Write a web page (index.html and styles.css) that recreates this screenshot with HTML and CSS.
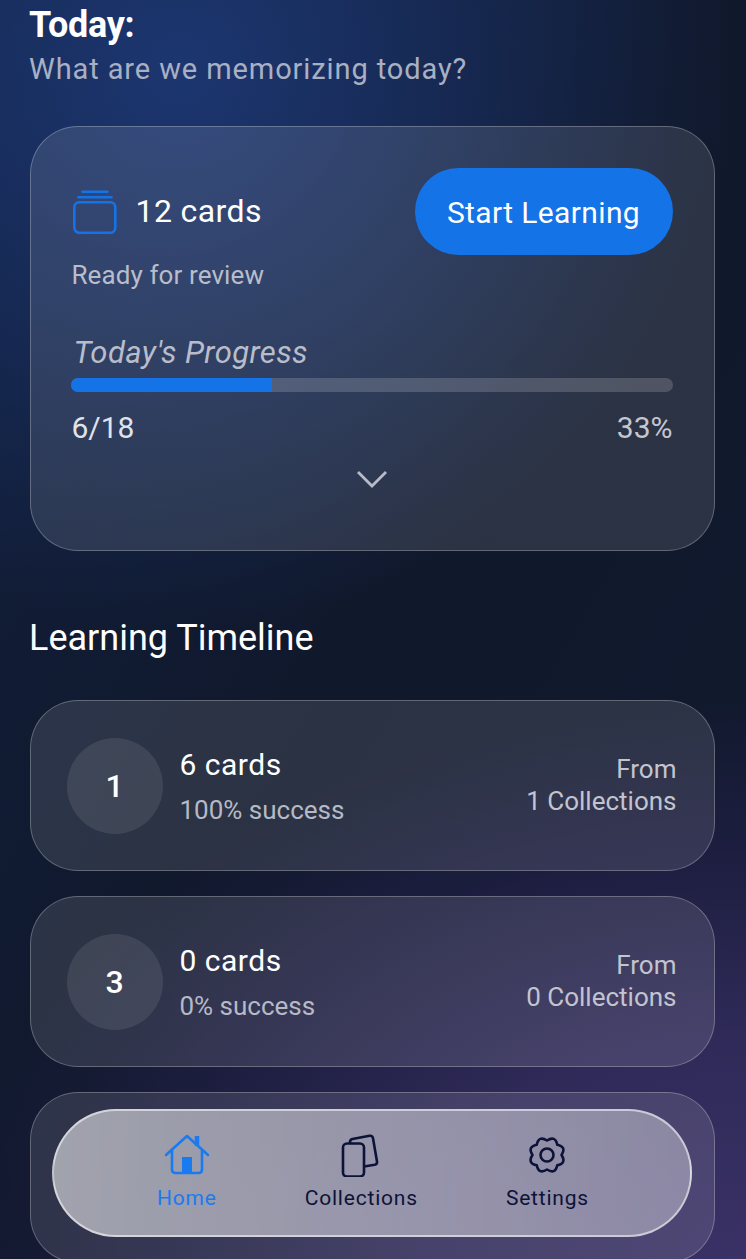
FILE: index.html
```html
<!DOCTYPE html>
<html lang="en">

<head>
  <meta charset="UTF-8">
  <meta name="viewport" content="width=device-width, initial-scale=1.0">
  <title>Today</title>
  <link rel="stylesheet" href="styles.css">
</head>

<body>
  <main class="page">
    <header class="page-head">
      <h1 class="page-title">Today:</h1>
      <p class="page-sub">What are we memorizing today?</p>
    </header>

    <section class="glass today-card">
      <div class="today-top">
        <div class="today-count">
          <svg class="stack-icon" width="46" height="46" viewBox="0 0 46 46" fill="none" stroke="#1473e6" stroke-width="2.6" stroke-linecap="round">
            <rect x="2.3" y="14.3" width="41" height="30.4" rx="5" />
            <path d="M6.5 9.2H39.5" />
            <path d="M10.5 3.8H35.5" />
          </svg>
          <span>12 cards</span>
        </div>
        <button class="start-btn">Start Learning</button>
      </div>
      <p class="today-ready">Ready for review</p>

      <p class="progress-label">Today's Progress</p>
      <div class="progress-track">
        <div class="progress-fill" style="width: 33.4%"></div>
      </div>
      <div class="progress-stats">
        <span>6/18</span>
        <span class="progress-pct">33%</span>
      </div>
      <svg class="chevron" width="32" height="20" viewBox="0 0 32 20" fill="none" stroke="#b8bcc8" stroke-width="2.8">
        <path d="M2 3L16 17L30 3" />
      </svg>
    </section>

    <h2 class="section-title">Learning Timeline</h2>

    <div class="timeline">
      <article class="glass day-card">
        <div class="day-badge">1</div>
        <div class="day-info">
          <div class="day-cards">6 cards</div>
          <div class="day-rate">100% success</div>
        </div>
        <div class="day-from">From<br>1 Collections</div>
      </article>
      <article class="glass day-card">
        <div class="day-badge">3</div>
        <div class="day-info">
          <div class="day-cards">0 cards</div>
          <div class="day-rate">0% success</div>
        </div>
        <div class="day-from">From<br>0 Collections</div>
      </article>
      <article class="glass day-card"></article>
    </div>
  </main>

  <nav class="bottom-nav">
    <a class="nav-item active" href="#">
      <svg width="46" height="44" viewBox="0 0 46 44" fill="none" stroke="#1a7bf0" stroke-width="2.6" stroke-linecap="round" stroke-linejoin="round">
        <path d="M2 22L23 3L44 22" />
        <path d="M8 18V36.5Q8 40 11.5 40H34.500Q38 40 38 36.500V18" />
        <path d="M33 3V13" stroke-width="4.5" stroke-linecap="butt" />
        <rect x="18" y="24" width="10" height="16" fill="#1a7bf0" stroke="none" />
      </svg>
      <span>Home</span>
    </a>
    <a class="nav-item" href="#">
      <svg width="44" height="44" viewBox="0 0 44 44" fill="none" stroke="#0d1338" stroke-width="2.6" stroke-linejoin="round">
        <rect x="4" y="10.500" width="21" height="33" rx="4" />
        <path d="M11 10.500V9Q11 6.500 13.500 6L30.500 2.800Q33.500 2.400 34 5.200L38 28.500Q38.400 31.200 35.700 31.800L25 33.500" />
      </svg>
      <span>Collections</span>
    </a>
    <a class="nav-item" href="#">
      <svg width="44" height="44" viewBox="-22 -22 44 44" fill="none" stroke="#0d1338" stroke-width="2.6" stroke-linejoin="round">
        <path d="M0 -14.500Q8.230 -19.860 10.250 -10.250Q19.860 -8.230 14.500 0Q19.860 8.230 10.250 10.250Q8.230 19.860 0 14.500Q-8.230 19.860 -10.250 10.250Q-19.860 8.230 -14.500 0Q-19.860 -8.230 -10.250 -10.250Q-8.230 -19.860 0 -14.500Z" />
        <circle cx="0" cy="0" r="6.500" />
      </svg>
      <span>Settings</span>
    </a>
  </nav>
</body>

</html>
```

FILE: styles.css
```css
* {
  box-sizing: border-box;
}

html,
body {
  margin: 0;
  height: 100%;
  overflow: hidden;
}

body {
  position: relative;
  font-family: Roboto, "Liberation Sans", sans-serif;
  color: #fff;
  background:
    radial-gradient(circle 560px at 180px 70px, rgba(28, 54, 112, 1), rgba(28, 54, 112, 0)),
    radial-gradient(ellipse 800px 560px at 746px 1259px, #3a3166 0%, #2f2a58 40%, #1d1e40 72%, rgba(20, 26, 48, 0) 100%),
    linear-gradient(to bottom right, #12203f 0%, #10182b 50%, #121a30 100%);
}

.page {
  padding: 4px 32px 0 30px;
}

.page-head {
  margin-left: -1px;
}

.page-title {
  margin: 0;
  font-size: 36px;
  line-height: 42px;
  font-weight: 700;
  letter-spacing: -0.3px;
}

.page-sub {
  margin: 3px 0 0;
  font-size: 29px;
  line-height: 40px;
  letter-spacing: 0.9px;
  color: #a9b0c4;
}

.glass {
  margin: 0 -0.5px;
  border: 1.5px solid rgba(255, 255, 255, 0.26);
  background: rgba(255, 255, 255, 0.115);
}

.today-card {
  margin-top: 37px;
  height: 425px;
  padding: 40.5px 41px 0 40px;
  border-radius: 48px;
}

.today-top {
  display: flex;
  align-items: center;
  justify-content: space-between;
}

.today-count {
  display: flex;
  align-items: center;
  gap: 18px;
  font-size: 32px;
  letter-spacing: 0.4px;
}

.stack-icon {
  margin-left: 1px;
}

.start-btn {
  width: 258px;
  height: 87px;
  padding: 2px 0 0;
  border: none;
  border-radius: 44px;
  background: #1473e6;
  color: #fff;
  font-family: inherit;
  font-size: 30px;
  letter-spacing: 0.37px;
}

.today-ready {
  margin: 0 0 0 1px;
  font-size: 26px;
  line-height: 40px;
  letter-spacing: 0.1px;
  color: #b9bdca;
}

.progress-label {
  margin: 38px 0 0 3px;
  font-size: 31px;
  line-height: 40px;
  font-style: italic;
  letter-spacing: 0.4px;
  color: #b9bdca;
}

.progress-track {
  height: 14px;
  margin-top: 5px;
  border-radius: 7px;
  background: rgba(255, 255, 255, 0.17);
  overflow: hidden;
}

.progress-fill {
  height: 100%;
  background: #1473e6;
}

.progress-stats {
  display: flex;
  justify-content: space-between;
  margin-top: 16px;
  padding-left: 1px;
  font-size: 30px;
  line-height: 40px;
  color: #e1e3e9;
}

.progress-pct {
  color: #c4c7d1;
}

.chevron {
  display: block;
  margin: 21px auto 0;
}

.section-title {
  margin: 63px 0 0 -1px;
  font-size: 36px;
  line-height: 48px;
  font-weight: 400;
}

.timeline {
  display: flex;
  flex-direction: column;
  gap: 25px;
  margin-top: 38px;
}

.day-card {
  display: flex;
  align-items: center;
  flex: none;
  height: 171px;
  padding: 0 37px 0 36px;
  border-radius: 48px;
}

.day-badge {
  display: flex;
  align-items: center;
  justify-content: center;
  width: 96px;
  height: 96px;
  border-radius: 50%;
  background: rgba(255, 255, 255, 0.09);
  font-size: 32px;
  font-weight: 500;
}

.day-info {
  flex: 1;
  margin-left: 17px;
  padding-top: 3px;
}

.day-cards {
  font-size: 30px;
  line-height: 44px;
  letter-spacing: 0.5px;
}

.day-rate {
  margin-top: 1px;
  font-size: 26px;
  line-height: 44px;
  color: #b6b9c6;
}

.day-from {
  padding-bottom: 2px;
  text-align: right;
  font-size: 26px;
  line-height: 32px;
  color: #c2c4d0;
}

.bottom-nav {
  position: absolute;
  left: 52px;
  right: 54px;
  bottom: 22px;
  height: 128px;
  display: flex;
  align-items: flex-start;
  justify-content: center;
  gap: 88px;
  padding: 22px 0 0 2px;
  border: 2.5px solid rgba(255, 255, 255, 0.55);
  border-radius: 64px;
  background: linear-gradient(to right, rgba(255, 255, 255, 0.55), rgba(255, 255, 255, 0.36));
}

.nav-item {
  display: flex;
  flex-direction: column;
  align-items: center;
  font-size: 21px;
  line-height: 26px;
  letter-spacing: 0.8px;
  color: #0d1338;
  text-decoration: none;
}

.nav-item span {
  margin-top: 8px;
}

.nav-item.active {
  color: #1a7bf0;
}
```
